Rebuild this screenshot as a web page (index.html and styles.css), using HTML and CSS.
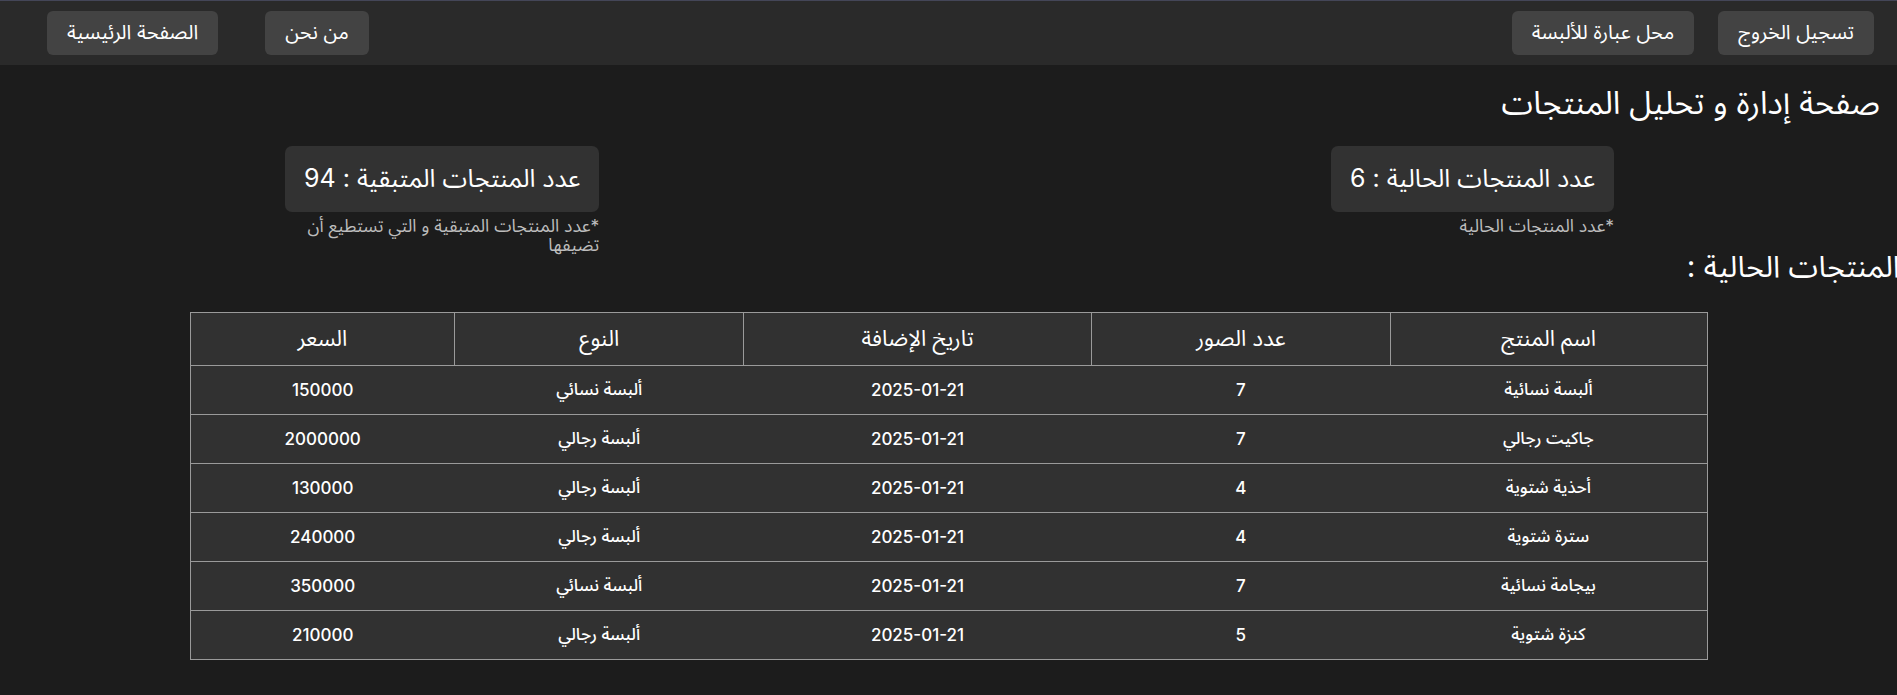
FILE: index.html
```html
<!DOCTYPE html>
<html lang="ar" dir="rtl">
<head>
<meta charset="utf-8">
<title>صفحة إدارة و تحليل المنتجات</title>
<link rel="stylesheet" href="styles.css">
</head>
<body>
<nav class="topbar">
  <div class="nav-group nav-right">
    <a class="nav-btn">تسجيل الخروج</a>
    <a class="nav-btn">محل عبارة للألبسة</a>
  </div>
  <div class="nav-group nav-left">
    <a class="nav-btn">من نحن</a>
    <a class="nav-btn">الصفحة الرئيسية</a>
  </div>
</nav>
<main class="content">
  <h1 class="page-title">صفحة إدارة و تحليل المنتجات</h1>
  <section class="stats">
    <div class="stat">
      <div class="stat-card">عدد المنتجات الحالية : 6</div>
      <div class="stat-note">*عدد المنتجات الحالية</div>
    </div>
    <div class="stat">
      <div class="stat-card">عدد المنتجات المتبقية : 94</div>
      <div class="stat-note">*عدد المنتجات المتبقية و التي تستطيع أن تضيفها</div>
    </div>
  </section>
  <h2 class="section-title">المنتجات الحالية :</h2>
  <table class="products">
    <thead>
      <tr>
        <th class="c-name">اسم المنتج</th>
        <th class="c-imgs">عدد الصور</th>
        <th class="c-date">تاريخ الإضافة</th>
        <th class="c-type">النوع</th>
        <th class="c-price">السعر</th>
      </tr>
    </thead>
    <tbody>
      <tr><td>ألبسة نسائية</td><td>7</td><td>2025-01-21</td><td>ألبسة نسائي</td><td>150000</td></tr>
      <tr><td>جاكيت رجالي</td><td>7</td><td>2025-01-21</td><td>ألبسة رجالي</td><td>2000000</td></tr>
      <tr><td>أحذية شتوية</td><td>4</td><td>2025-01-21</td><td>ألبسة رجالي</td><td>130000</td></tr>
      <tr><td>سترة شتوية</td><td>4</td><td>2025-01-21</td><td>ألبسة رجالي</td><td>240000</td></tr>
      <tr><td>بيجامة نسائية</td><td>7</td><td>2025-01-21</td><td>ألبسة نسائي</td><td>350000</td></tr>
      <tr><td>كنزة شتوية</td><td>5</td><td>2025-01-21</td><td>ألبسة رجالي</td><td>210000</td></tr>
    </tbody>
  </table>
</main>
</body>
</html>
```

FILE: styles.css
```css
* { box-sizing: border-box; }

html, body {
  margin: 0;
  padding: 0;
  background: #1c1c1c;
  color: #ffffff;
  font-family: "Inter", "Noto Sans Arabic", "Noto Sans", "DejaVu Sans", sans-serif;
  overflow: hidden;
}

.topbar {
  display: flex;
  justify-content: space-between;
  align-items: center;
  height: 65px;
  background: #2a2a2a;
  border-top: 1px solid #444658;
  padding: 0 23px 0 47px;
}

.nav-group {
  display: flex;
  align-items: center;
}

.nav-right { gap: 24px; }
.nav-left { gap: 47px; }

.nav-btn {
  display: flex;
  align-items: center;
  justify-content: center;
  height: 44px;
  padding: 0 20px;
  background: #434343;
  border-radius: 6px;
  color: #ffffff;
  font-size: 20px;
  text-decoration: none;
}

.content {
  padding: 0 17px;
}

.page-title {
  margin: 16px 0 0;
  font-size: 32px;
  font-weight: 400;
  line-height: 44px;
}

.stats {
  display: flex;
  justify-content: space-between;
  align-items: flex-start;
  padding: 0 266px 0 268px;
  margin-top: 21px;
}

.stat {
  display: grid;
  grid-template-columns: min-content;
}

.stat-card {
  height: 66px;
  display: flex;
  align-items: center;
  padding: 0 19px;
  background: #323232;
  border-radius: 7px;
  font-size: 25px;
  white-space: nowrap;
}

.stat-note {
  margin-top: 4px;
  font-size: 17.5px;
  line-height: 19px;
  color: #bdbdbd;
}

.section-title {
  margin: 0 -20px 0 0;
  font-size: 30px;
  font-weight: 400;
  line-height: 24px;
}

.products {
  width: 1518px;
  margin: 34px auto 0;
  border-collapse: collapse;
  background: #313131;
  border: 1px solid #9a9a9a;
  text-align: center;
}

.products th {
  height: 53px;
  font-size: 22px;
  font-weight: 400;
  border: 1px solid #9a9a9a;
}

.products td {
  height: 49px;
  font-size: 17px;
  font-weight: 500;
  border-top: 1px solid #9a9a9a;
}

.c-name { width: 317px; }
.c-imgs { width: 299px; }
.c-date { width: 348px; }
.c-type { width: 289px; }
.c-price { width: 265px; }
```
